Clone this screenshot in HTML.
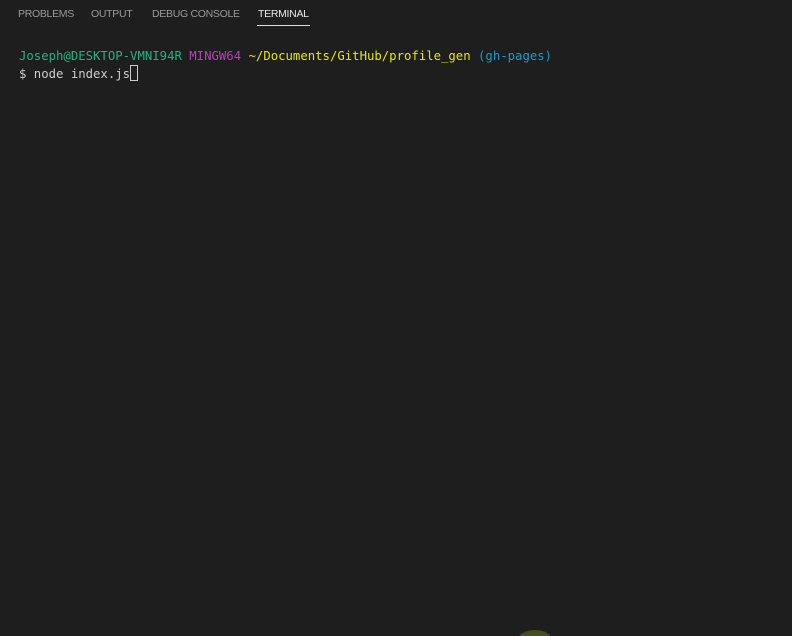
<!DOCTYPE html>
<html><head><style>
html,body{margin:0;padding:0;background:#1e1e1f;width:792px;height:636px;overflow:hidden;position:relative}
.tab{position:absolute;top:8px;font:10.5px "Liberation Sans",sans-serif;color:#9a9a9a;letter-spacing:-0.3px;white-space:nowrap}
.term{position:absolute;left:19px;font:12.3px "DejaVu Sans Mono",monospace;white-space:pre;line-height:18px}
.cur{display:inline-block;width:6px;height:14px;border:1px solid #ccc;vertical-align:-3px}
</style></head><body>
<div class="tab" style="left:18px">PROBLEMS</div>
<div class="tab" style="left:91px">OUTPUT</div>
<div class="tab" style="left:152px">DEBUG CONSOLE</div>
<div class="tab" style="left:258px;color:#e7e7e7">TERMINAL</div>
<div style="position:absolute;left:257px;top:25px;width:53px;height:1px;background:#e0e0e0"></div>
<div class="term" style="top:47px"><span style="color:#23b37f">Joseph@DESKTOP-VMNI94R</span> <span style="color:#bc3fbc">MINGW64</span> <span style="color:#e5e510">~/Documents/GitHub/profile_gen</span> <span style="color:#1b9ccb">(gh-pages)</span></div>
<div class="term" style="top:65px;color:#ccc">$ node index.js<span class="cur"></span></div>
<div style="position:absolute;left:518px;top:630px;width:34px;height:20px;border-radius:50%;background:#4a4a1e"></div>
</body></html>
